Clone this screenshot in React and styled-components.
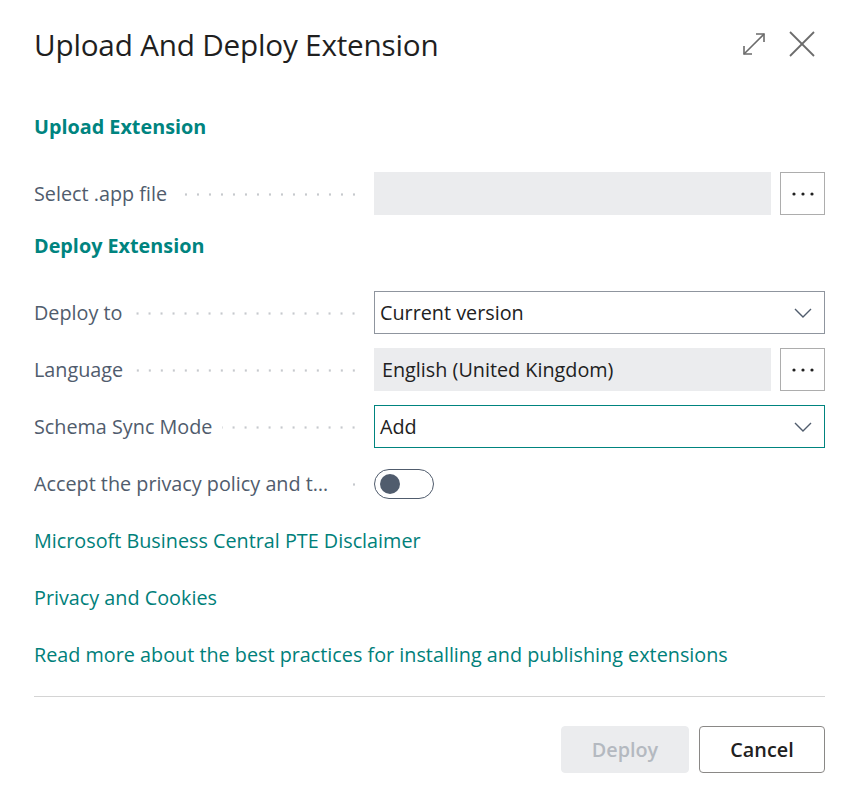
import React, { useState } from "react";
import styled, { createGlobalStyle } from "styled-components";

const GlobalStyle = createGlobalStyle`
  body {
    margin: 0;
    background: #fff;
    font-family: "Open Sans", "Noto Sans", sans-serif;
    color: #212121;
  }
`;

const Dialog = styled.div`
  width: 858px;
  padding: 0 33px 0 34px;
  box-sizing: border-box;
`;

const Header = styled.div`
  height: 88px;
  display: flex;
  align-items: center;
  justify-content: space-between;
`;

const Title = styled.h1`
  margin: 0;
  font-size: 29.7px;
  font-weight: 400;
  color: #1f1f1f;
  letter-spacing: -0.2px;
`;

const HeaderIcons = styled.div`
  display: flex;
  align-items: center;
  gap: 22px;
  margin-right: 10px;
  color: #6b6b6b;
`;

const Heading = styled.h2`
  margin: ${(p) => (p.$first ? "17px" : "9px")} 0 24px;
  height: 43px;
  display: flex;
  align-items: center;
  font-size: 19.8px;
  font-weight: 700;
  color: #00847f;
`;

const FieldRow = styled.div`
  display: grid;
  grid-template-columns: 326px 1fr;
  column-gap: 14px;
  height: 43px;
  align-items: center;
  margin-bottom: ${(p) => (p.$last ? "0" : "14px")};
`;

const Label = styled.div`
  display: flex;
  align-items: center;
  min-width: 0;
  font-size: 19.8px;
  color: #505c6d;
`;

const LabelText = styled.span`
  white-space: nowrap;
  overflow: hidden;
  text-overflow: ellipsis;
  flex-shrink: 1;
  min-width: 0;
`;

const Leader = styled.span`
  flex: 1 0 12px;
  height: 3px;
  margin: 2px 0 0 10px;
  background-image: radial-gradient(circle, #c6c9cd 1px, transparent 1.3px);
  background-size: 12px 3px;
  background-position: right center;
  background-repeat: repeat-x;
`;

const Control = styled.div`
  display: flex;
  align-items: center;
  gap: 9px;
  height: 43px;
`;

const ReadBox = styled.div`
  flex: 1;
  align-self: stretch;
  background: #ebecee;
  display: flex;
  align-items: center;
  padding: 0 8px;
  font-size: 19.8px;
  color: #212121;
`;

const SelectBox = styled.div`
  flex: 1;
  align-self: stretch;
  box-sizing: border-box;
  border: 1px solid ${(p) => (p.$focused ? "#00847f" : "#8f959e")};
  display: flex;
  align-items: center;
  justify-content: space-between;
  padding: 0 12px 0 5px;
  font-size: 19.8px;
  color: #212121;
`;

const LookupButton = styled.button`
  width: 45px;
  height: 43px;
  box-sizing: border-box;
  border: 1px solid #adadad;
  background: #fff;
  display: flex;
  align-items: center;
  justify-content: center;
  padding: 0;
`;

const Toggle = styled.button`
  width: 60px;
  height: 30px;
  box-sizing: border-box;
  border: 1.5px solid #505c6d;
  border-radius: 15px;
  background: #fff;
  padding: 0 0 0 5px;
  display: flex;
  align-items: center;
  cursor: pointer;
`;

const Knob = styled.span`
  width: 20px;
  height: 20px;
  border-radius: 50%;
  background: #505c6d;
  transform: translateX(${(p) => (p.$on ? "29px" : "0")});
`;

const LinkRow = styled.div`
  height: 43px;
  display: flex;
  align-items: center;
  margin-top: 14px;
`;

const TealLink = styled.a`
  font-size: 19.8px;
  color: #00807a;
  text-decoration: none;
`;

const Divider = styled.hr`
  border: 0;
  border-top: 1px solid #d4d4d4;
  margin: 20px 0 29px;
`;

const Footer = styled.div`
  display: flex;
  justify-content: flex-end;
  gap: 10px;
`;

const FooterButton = styled.button`
  width: ${(p) => p.$w}px;
  height: 47px;
  box-sizing: border-box;
  border-radius: 4px;
  font-family: inherit;
  font-size: 19.8px;
  font-weight: 600;
  border: 1px solid ${(p) => (p.$disabled ? "#ebecee" : "#8a8886")};
  background: ${(p) => (p.$disabled ? "#ebecee" : "#fff")};
  color: ${(p) => (p.$disabled ? "#b4b9c0" : "#212121")};
`;

const Dots = () => (
  <svg width="22" height="4" viewBox="0 0 22 4">
    <circle cx="2" cy="2" r="1.6" fill="#212121" />
    <circle cx="11" cy="2" r="1.6" fill="#212121" />
    <circle cx="20" cy="2" r="1.6" fill="#212121" />
  </svg>
);

const Chevron = () => (
  <svg width="18" height="10" viewBox="0 0 18 10">
    <path d="M1 1 L9 9 L17 1" fill="none" stroke="#505c6d" strokeWidth="1.4" />
  </svg>
);

const ExpandIcon = () => (
  <svg width="26" height="26" viewBox="0 0 26 26">
    <g fill="none" stroke="currentColor" strokeWidth="1.6">
      <path d="M3 23 L23 3" />
      <path d="M15 3 H23 V11" />
      <path d="M3 15 V23 H11" />
    </g>
  </svg>
);

const CloseIcon = () => (
  <svg width="26" height="26" viewBox="0 0 26 26">
    <g fill="none" stroke="currentColor" strokeWidth="1.8">
      <path d="M1 1 L25 25" />
      <path d="M25 1 L1 25" />
    </g>
  </svg>
);

const Field = ({ label, children, last }) => (
  <FieldRow $last={last}>
    <Label>
      <LabelText>{label}</LabelText>
      <Leader />
    </Label>
    <Control>{children}</Control>
  </FieldRow>
);

export default function App() {
  const [accepted, setAccepted] = useState(false);

  return (
    <>
      <GlobalStyle />
      <Dialog>
        <Header>
          <Title>Upload And Deploy Extension</Title>
          <HeaderIcons>
            <ExpandIcon />
            <CloseIcon />
          </HeaderIcons>
        </Header>

        <Heading $first>Upload Extension</Heading>
        <Field label="Select .app file" last>
          <ReadBox />
          <LookupButton>
            <Dots />
          </LookupButton>
        </Field>

        <Heading>Deploy Extension</Heading>
        <Field label="Deploy to">
          <SelectBox>
            Current version
            <Chevron />
          </SelectBox>
        </Field>
        <Field label="Language">
          <ReadBox>English (United Kingdom)</ReadBox>
          <LookupButton>
            <Dots />
          </LookupButton>
        </Field>
        <Field label="Schema Sync Mode">
          <SelectBox $focused>
            Add
            <Chevron />
          </SelectBox>
        </Field>
        <Field label="Accept the privacy policy and the terms of use" last>
          <Toggle onClick={() => setAccepted(!accepted)}>
            <Knob $on={accepted} />
          </Toggle>
        </Field>

        <LinkRow>
          <TealLink href="#">Microsoft Business Central PTE Disclaimer</TealLink>
        </LinkRow>
        <LinkRow>
          <TealLink href="#">Privacy and Cookies</TealLink>
        </LinkRow>
        <LinkRow>
          <TealLink href="#">
            Read more about the best practices for installing and publishing extensions
          </TealLink>
        </LinkRow>

        <Divider />

        <Footer>
          <FooterButton $w={128} $disabled disabled>
            Deploy
          </FooterButton>
          <FooterButton $w={126}>Cancel</FooterButton>
        </Footer>
      </Dialog>
    </>
  );
}
